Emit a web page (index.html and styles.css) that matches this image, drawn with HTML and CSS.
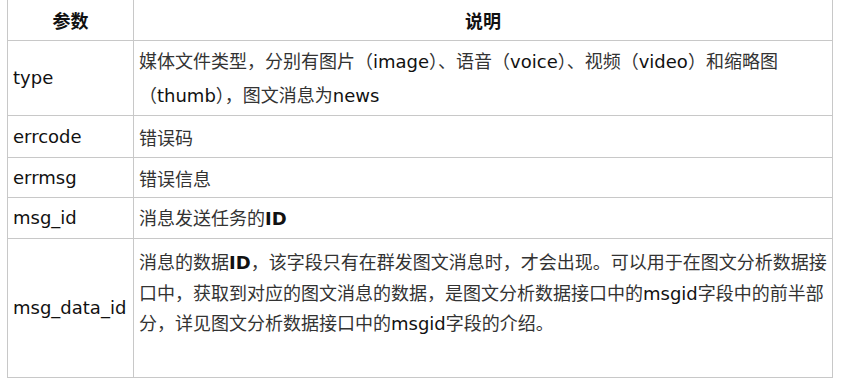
FILE: index.html
```html
<!DOCTYPE html>
<html lang="zh">
<head>
<meta charset="utf-8">
<link rel="stylesheet" href="styles.css">
</head>
<body>
<table class="params">
  <colgroup><col class="c-name"><col class="c-desc"></colgroup>
  <thead>
    <tr class="r-head"><th>参数</th><th>说明</th></tr>
  </thead>
  <tbody>
    <tr class="r-type"><td class="en">type</td><td class="lh33">媒体文件类型，分别有图片（<span class="en">image</span>）、语音（<span class="en">voice</span>）、视频（<span class="en">video</span>）和缩略图（<span class="en">thumb</span>），图文消息为<span class="en">news</span></td></tr>
    <tr class="r-a"><td class="en">errcode</td><td>错误码</td></tr>
    <tr class="r-b"><td class="en">errmsg</td><td>错误信息</td></tr>
    <tr class="r-c"><td class="en">msg_id</td><td>消息发送任务的<span class="en strong">ID</span></td></tr>
    <tr class="r-last"><td class="en">msg_data_id</td><td class="top">消息的数据<span class="en strong">ID</span>，该字段只有在群发图文消息时，才会出现。可以用于在图文分析数据接口中，获取到对应的图文消息的数据，是图文分析数据接口中的<span class="en">msgid</span>字段中的前半部分，详见图文分析数据接口中的<span class="en">msgid</span>字段的介绍。</td></tr>
  </tbody>
</table>
</body>
</html>
```

FILE: styles.css
```css
html, body {
  margin: 0;
  padding: 0;
  background: #fff;
}
body {
  padding: 0 0 0 7px;
  font-family: "Noto Sans CJK SC", sans-serif;
  font-size: 18px;
  color: #333;
}
.params {
  border-collapse: collapse;
  width: 826px;
  margin-top: -1px;
  table-layout: fixed;
}
.c-name { width: 126px; }
.params th, .params td {
  border: 1px solid #c8c8c8;
  padding: 0 5px;
  text-align: left;
  vertical-align: middle;
  line-height: 28px;
}
.params th {
  text-align: center;
  font-weight: bold;
  color: #111;
}
.en {
  font-family: "DejaVu Sans", sans-serif;
  color: #111;
}
.strong { font-weight: bold; }
.params td.lh33 { line-height: 33px; }
.r-head { height: 41px; }
.r-type { height: 75px; }
.r-a { height: 42px; }
.r-b { height: 40px; }
.r-c { height: 41px; }
.r-last { height: 139px; }
.params td.top {
  vertical-align: top;
  padding-top: 8px;
  line-height: 29.5px;
}
```
